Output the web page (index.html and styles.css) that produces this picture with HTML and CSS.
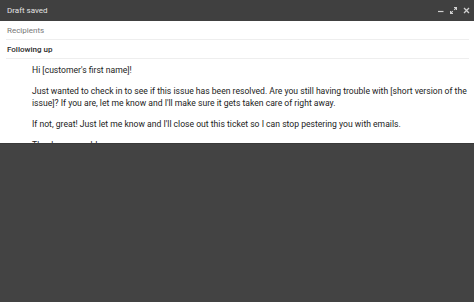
FILE: index.html
```html
<!DOCTYPE html>
<html lang="en">
<head>
  <meta charset="UTF-8">
  <title>Draft saved</title>
  <link rel="stylesheet" href="styles.css">
</head>
<body>
  <div class="compose">
    <div class="titlebar">
      <span class="title">Draft saved</span>
      <div class="controls">
        <svg class="ctl" width="6" height="7" viewBox="0 0 6 7"><path d="M0 4.5h5.5" stroke="#d0d0d0" stroke-width="1.2"/></svg>
        <svg class="ctl" width="7" height="7" viewBox="0 0 7 7"><path d="M4 0.5h2.5v2.5M6.5 0.5L4.2 2.8M3 6.5h-2.5v-2.5M0.5 6.5L2.8 4.2" stroke="#d0d0d0" stroke-width="1.1" fill="none"/></svg>
        <svg class="ctl" width="7" height="7" viewBox="0 0 7 7"><path d="M1 1l5 5M6 1L1 6" stroke="#d0d0d0" stroke-width="1.3"/></svg>
      </div>
    </div>
    <div class="field recipients">Recipients</div>
    <div class="field subject">Following up</div>
    <div class="message">
      <p>Hi [customer's first name]!</p>
      <p>Just wanted to check in to see if this issue has been resolved. Are you still having trouble with [short version of the issue]? If you are, let me know and I'll make sure it gets taken care of right away.</p>
      <p>If not, great! Just let me know and I'll close out this ticket so I can stop pestering you with emails.</p>
      <p>Thanks so much!</p>
    </div>
  </div>
  <div class="shade"></div>
</body>
</html>
```

FILE: styles.css
```css
body {
  margin: 0;
  width: 474px;
  height: 302px;
  overflow: hidden;
  font-family: Roboto, "Liberation Sans", Arial, sans-serif;
  background: #fff;
  display: flex;
  flex-direction: column;
}

.compose {
  height: 143px;
  overflow: hidden;
  flex-shrink: 0;
}

.titlebar {
  height: 21px;
  background: #404040;
  display: flex;
  align-items: center;
  justify-content: space-between;
  padding: 0 4px 0 7px;
}

.title {
  color: #e4e4e4;
  font-size: 8px;
}

.controls {
  display: flex;
  gap: 6px;
  align-items: center;
}

.ctl {
  display: block;
}

.field {
  height: 18px;
  line-height: 20px;
  margin: 0 5px 0 6px;
  padding-left: 1px;
  font-size: 8px;
  border-bottom: 1px solid #eeeeee;
}

.recipients {
  color: #777;
}

.subject {
  color: #2a2a2a;
  font-weight: 500;
}

.message {
  padding: 5px 2px 0 32px;
  font-size: 8.6px;
  line-height: 12px;
  color: #222;
}

.message p {
  margin: 0 0 9px;
}

.shade {
  flex: 1;
  background: #434343;
  border-top: 1px solid #3a3a3a;
}
```
